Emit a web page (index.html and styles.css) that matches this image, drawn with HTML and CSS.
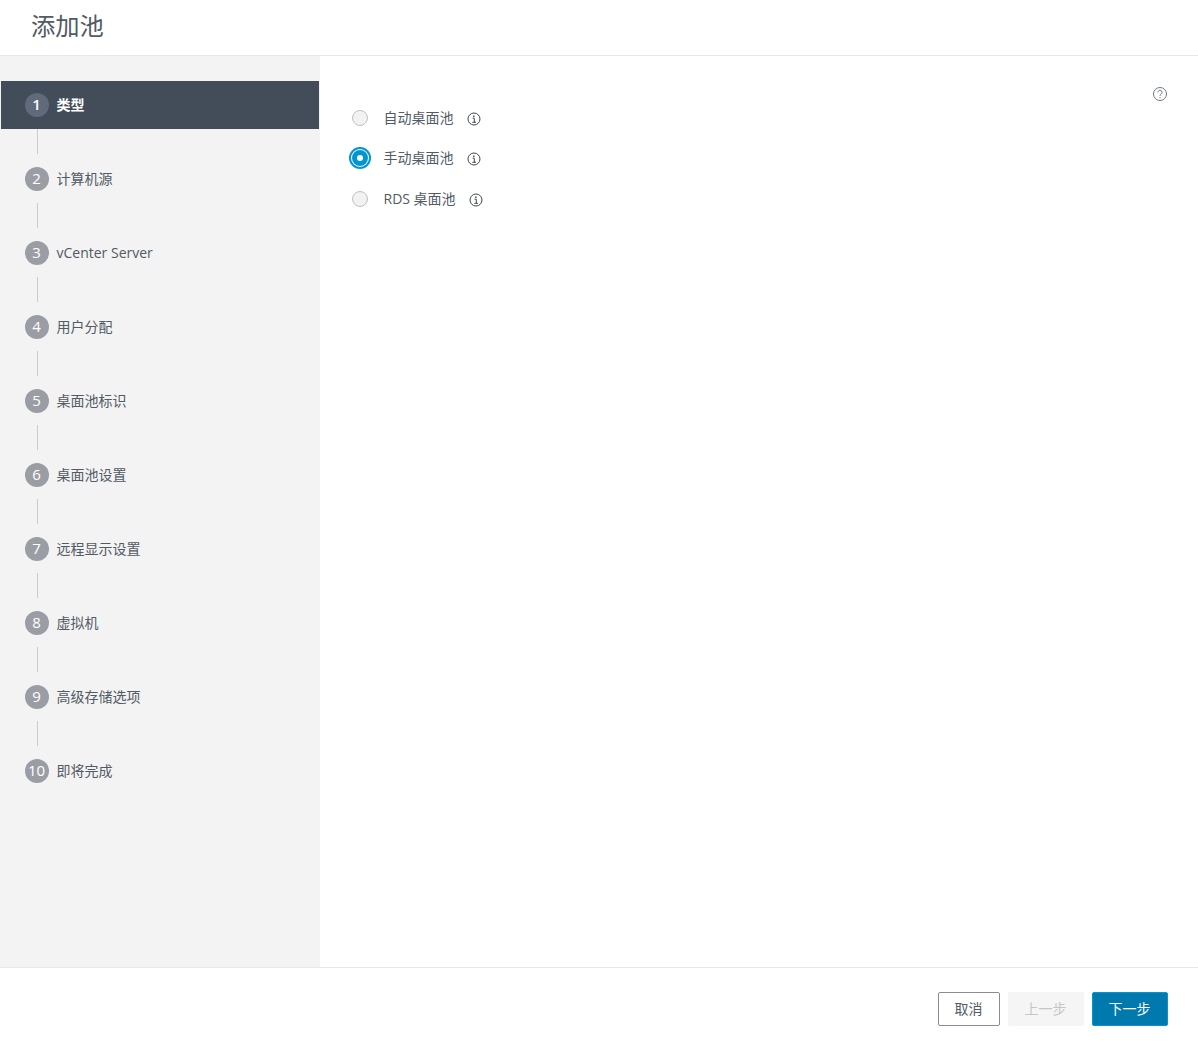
FILE: index.html
```html
<!DOCTYPE html>
<html lang="zh-CN">
<head>
<meta charset="utf-8">
<title>添加池</title>
<link rel="stylesheet" href="styles.css">
</head>
<body>
<div class="modal">
  <header class="head"><h1 class="title">添加池</h1></header>
  <div class="main">
    <nav class="nav">
      <div class="step active"><span class="num">1</span><span class="label">类型</span></div>
      <div class="link"></div>
      <div class="step"><span class="num">2</span><span class="label">计算机源</span></div>
      <div class="link"></div>
      <div class="step"><span class="num">3</span><span class="label">vCenter Server</span></div>
      <div class="link"></div>
      <div class="step"><span class="num">4</span><span class="label">用户分配</span></div>
      <div class="link"></div>
      <div class="step"><span class="num">5</span><span class="label">桌面池标识</span></div>
      <div class="link"></div>
      <div class="step"><span class="num">6</span><span class="label">桌面池设置</span></div>
      <div class="link"></div>
      <div class="step"><span class="num">7</span><span class="label">远程显示设置</span></div>
      <div class="link"></div>
      <div class="step"><span class="num">8</span><span class="label">虚拟机</span></div>
      <div class="link"></div>
      <div class="step"><span class="num">9</span><span class="label">高级存储选项</span></div>
      <div class="link"></div>
      <div class="step"><span class="num">10</span><span class="label">即将完成</span></div>
    </nav>
    <section class="content">
      <div class="help-row">
        <svg class="help" width="16" height="16" viewBox="0 0 16 16" fill="none" stroke="#6f7780"><circle cx="8" cy="8" r="6.5"/><path d="M5.9 6.4a2.1 2.1 0 1 1 3.3 1.7c-.8.5-1.2.9-1.2 1.8"/><path d="M8 11v1.2"/></svg>
      </div>
      <div class="options">
        <div class="option"><span class="radio"></span><span class="opt-label">自动桌面池</span><svg class="info" width="14" height="14" viewBox="0 0 14 14" fill="none" stroke="#3f4852"><circle cx="7" cy="7" r="6"/><path d="M5.6 6.2H7.3V10.3M5.3 10.3H9"/><path d="M6.9 3.4v1.5" stroke-width="1.4"/></svg></div>
        <div class="option"><span class="radio on"></span><span class="opt-label">手动桌面池</span><svg class="info" width="14" height="14" viewBox="0 0 14 14" fill="none" stroke="#3f4852"><circle cx="7" cy="7" r="6"/><path d="M5.6 6.2H7.3V10.3M5.3 10.3H9"/><path d="M6.9 3.4v1.5" stroke-width="1.4"/></svg></div>
        <div class="option"><span class="radio"></span><span class="opt-label">RDS 桌面池</span><svg class="info" width="14" height="14" viewBox="0 0 14 14" fill="none" stroke="#3f4852"><circle cx="7" cy="7" r="6"/><path d="M5.6 6.2H7.3V10.3M5.3 10.3H9"/><path d="M6.9 3.4v1.5" stroke-width="1.4"/></svg></div>
      </div>
    </section>
  </div>
  <footer class="foot">
    <button class="btn cancel" type="button">取消</button>
    <button class="btn prev" type="button">上一步</button>
    <button class="btn next" type="button">下一步</button>
  </footer>
</div>
</body>
</html>
```
FILE: styles.css
```css
*, *::before, *::after { box-sizing: border-box; }
html, body { margin: 0; height: 100%; background: #fff; }
body { font-family: "Open Sans", "Noto Sans CJK SC", sans-serif; font-size: 14px; color: #525a64; }
.modal { display: flex; flex-direction: column; height: 1046px; overflow: hidden; }
.head { height: 56px; flex: none; border-bottom: 1px solid #e8e8e8; padding-left: 31px; }
.title { margin: 0; font-size: 24.3px; font-weight: 400; line-height: 52px; color: #525a64; }
.main { flex: 1; display: flex; min-height: 0; }
.nav { width: 320px; flex: none; background: #f3f3f3; padding: 25px 1px 0 1px; }
.step { height: 48px; display: flex; align-items: center; padding-left: 24px; }
.step.active { background: #434d5a; color: #fff; font-weight: 700; }
.num { width: 24px; height: 24px; border-radius: 50%; background: #9a9ea4; color: #fff; font-size: 15px; font-weight: 400; line-height: 22px; padding: 0 1px 2px 0; display: flex; align-items: center; justify-content: center; margin-right: 7.5px; flex: none; }
.active .num { background: #5f6b7a; font-weight: 600; }
.label { line-height: 20px; }
.link { width: 1px; height: 25px; background: #ccc; margin: 0 0 1px 36px; }
.content { flex: 1; padding: 30px 30px 0 30px; position: relative; }
.help-row { position: absolute; top: 30px; right: 30px; }
.help { display: block; }
.options { display: flex; flex-direction: column; padding-top: 11.5px; }
.option { display: flex; align-items: center; height: 40.5px; }
.radio { width: 16px; height: 16px; border-radius: 50%; background: #f2f2f2; border: 1px solid #bcc1c7; margin-left: 2px; flex: none; margin-right: 15.5px; }
.radio.on { width: 22px; height: 22px; margin-left: -1px; margin-right: 12.5px; background: #0095d3; border: 0; position: relative; }
.radio.on::before { content: ""; position: absolute; inset: 2px; border-radius: 50%; background: #fff; }
.radio.on::after { content: ""; position: absolute; left: 3px; top: 3px; width: 16px; height: 16px; border-radius: 50%; background: #fff; border: 5px solid #0095d3; }
.opt-label { line-height: 20px; }
.info { margin-left: 13px; flex: none; position: relative; top: 1px; }
.foot { height: 79px; flex: none; border-top: 1px solid #e8e8e8; display: flex; justify-content: flex-end; align-items: flex-start; gap: 8px; padding: 24px 30px 0 0; }
.btn { height: 34px; border-radius: 2px; font: inherit; font-size: 14px; padding: 0 1px 2px 0; cursor: pointer; }
.cancel { width: 62px; background: #fff; border: 1px solid #8c8c8c; color: #525a64; }
.prev { width: 76px; background: #f5f5f5; border: 1px solid #f5f5f5; color: #c6c6c6; }
.next { width: 76px; background: #0079ad; border: 1px solid #0095d3; color: #fff; }
```
